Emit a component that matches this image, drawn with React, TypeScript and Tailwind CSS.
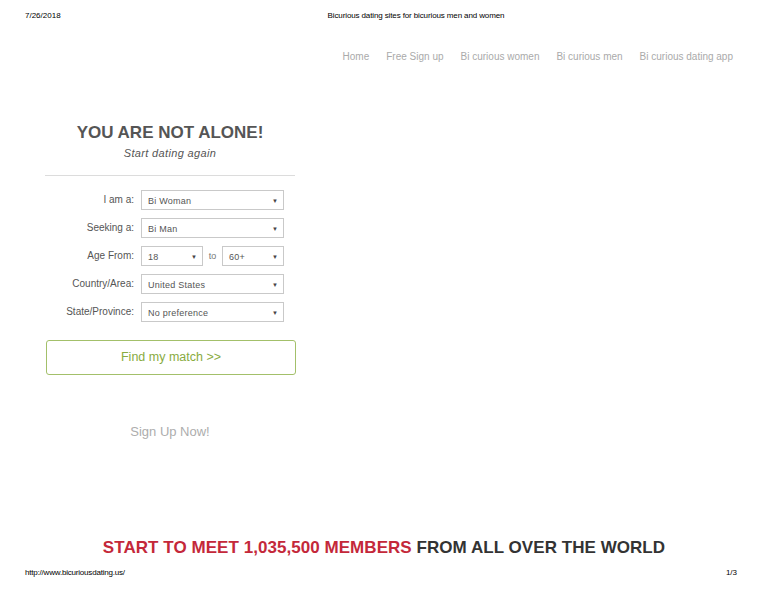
import React from "react";

const font = { fontFamily: '"Liberation Sans", Arial, sans-serif' };

function Select({ value, w }: { value: string; w: string }) {
  return (
    <div
      className={`${w} h-[20px] border border-[#c9c9c9] bg-white flex items-center justify-between pl-[6px] pr-[5px]`}
    >
      <span className="text-[9px] leading-[10px] pt-[2px] tracking-[0.25px] text-[#555]">{value}</span>
      <span className="text-[6px] text-[#444] leading-none pt-[1px]">▼</span>
    </div>
  );
}

function Row({ label, children }: { label: string; children: React.ReactNode }) {
  return (
    <div className="flex items-center h-[20px]">
      <div className="w-[89px] text-right text-[10px] leading-[12px] text-[#555]">{label}</div>
      <div className="ml-[7px] w-[143px] flex items-center justify-between">{children}</div>
    </div>
  );
}

export default function App() {
  return (
    <div className="w-[768px] h-[594px] bg-white flex flex-col overflow-hidden" style={font}>
      {/* print header */}
      <div className="h-[32px] pt-[11px] flex text-[8px] leading-[10px] text-black">
        <span className="ml-[25px]">7/26/2018</span>
        <span className="ml-[267px] tracking-[-0.12px]">Bicurious dating sites for bicurious men and women</span>
      </div>

      {/* nav */}
      <div className="mt-[18px] h-[14px] flex justify-end pr-[35px] gap-[17px] text-[10px] leading-[14px] text-[#aaaaaa]">
        <span>Home</span>
        <span>Free Sign up</span>
        <span>Bi curious women</span>
        <span>Bi curious men</span>
        <span>Bi curious dating app</span>
      </div>

      {/* left panel */}
      <div className="ml-[45px] w-[250px] flex flex-col">
        <div className="mt-[59px] h-[20px] text-center text-[17px] leading-[20px] font-bold text-[#555]">
          YOU ARE NOT ALONE!
        </div>
        <div className="mt-[3px] h-[14px] text-center text-[11px] leading-[14px] italic tracking-[0.35px] text-[#555]">
          Start dating again
        </div>
        <div className="mt-[15px] border-t border-[#dcdcdc]" />

        <div className="mt-[14px] flex flex-col gap-[8px]">
          <Row label="I am a:">
            <Select value="Bi Woman" w="w-[143px]" />
          </Row>
          <Row label="Seeking a:">
            <Select value="Bi Man" w="w-[143px]" />
          </Row>
          <Row label="Age From:">
            <Select value="18" w="w-[62px]" />
            <span className="text-[9px] text-[#777] pt-[1px]">to</span>
            <Select value="60+" w="w-[62px]" />
          </Row>
          <Row label="Country/Area:">
            <Select value="United States" w="w-[143px]" />
          </Row>
          <Row label="State/Province:">
            <Select value="No preference" w="w-[143px]" />
          </Row>
        </div>

        <div className="mt-[18px] ml-[1px] h-[35px] w-[250px] border border-[#a3c06a] rounded-[3px] flex items-center justify-center text-[12.5px] text-[#89ab3f]">
          Find my match &gt;&gt;
        </div>

        <div className="mt-[49px] h-[16px] text-center text-[13px] leading-[16px] text-[#adadad]">
          Sign Up Now!
        </div>
      </div>

      {/* members heading */}
      <div className="mt-[98px] h-[20px] text-center text-[17px] leading-[20px] font-bold tracking-[0.05px]">
        <span className="text-[#c4283a]">START TO MEET 1,035,500 MEMBERS</span>{" "}
        <span className="text-[#333]">FROM ALL OVER THE WORLD</span>
      </div>

      {/* print footer */}
      <div className="mt-[10px] h-[10px] flex justify-between text-[8px] leading-[10px] text-black">
        <span className="ml-[25px] tracking-[-0.2px]">http://www.bicuriousdating.us/</span>
        <span className="mr-[31px]">1/3</span>
      </div>
    </div>
  );
}
